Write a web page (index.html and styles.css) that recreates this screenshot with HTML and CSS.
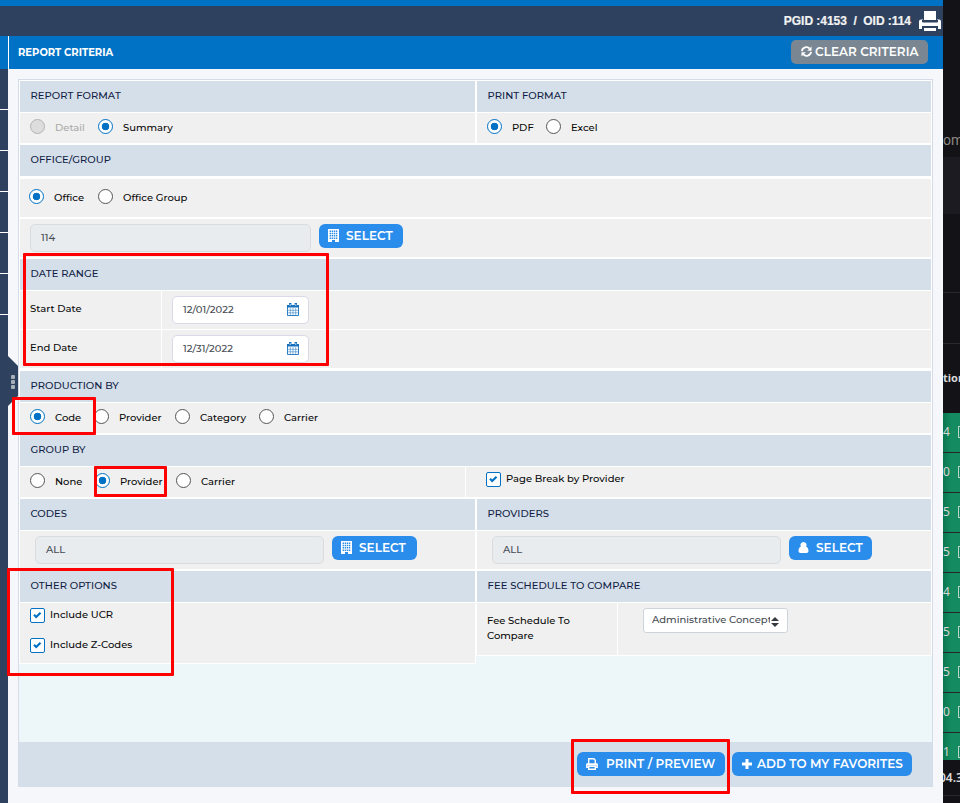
FILE: index.html
```html
<!DOCTYPE html>
<html lang="en">
<head>
<meta charset="utf-8">
<title>Report Criteria</title>
<link rel="stylesheet" href="styles.css">
</head>
<body>
<svg class="defs" width="0" height="0">
  <symbol id="building" viewBox="0 0 11 13"><path fill="currentColor" fill-rule="evenodd" d="M0 0H11V13H7V11H4V13H0ZM1.6 1.5V3H3V1.5ZM3.7 1.5V3H5.1V1.5ZM5.8 1.5V3H7.2V1.5ZM7.9 1.5V3H9.3V1.5ZM1.6 3.8V5.3H3V3.8ZM3.7 3.8V5.3H5.1V3.8ZM5.8 3.8V5.3H7.2V3.8ZM7.9 3.8V5.3H9.3V3.8ZM1.6 6.1V7.6H3V6.1ZM3.7 6.1V7.6H5.1V6.1ZM5.8 6.1V7.6H7.2V6.1ZM7.9 6.1V7.6H9.3V6.1ZM1.6 8.4V9.9H3V8.4ZM3.7 8.4V9.9H5.1V8.4ZM5.8 8.4V9.9H7.2V8.4ZM7.9 8.4V9.9H9.3V8.4Z"/></symbol>
  <symbol id="calendar" viewBox="0 0 12 13"><path fill="none" stroke="currentColor" stroke-width=".9" d="M.5 2.5h11v10H.5z"/><path fill="none" stroke="currentColor" stroke-width=".5" d="M3.3 5v7M6 5v7M8.7 5v7M1 7.3h10M1 9.8h10"/><path fill="currentColor" d="M0 2h12v2.6H0zM2 0h2.4v4H2zM7.6 0H10v4H7.6z"/><path stroke="#fff" stroke-width=".7" d="M3.2 1v2M8.8 1v2"/></symbol>
</svg>
<div class="app">
  <header class="top"><span class="ids">PGID :4153&nbsp; /&nbsp; OID :114</span>
    <svg class="printer" viewBox="0 0 22 20"><path fill="#fff" d="M5 0h12v9H5zM0 10.500q0-2 2-2h2V11h14V8.500h2q2 0 2 2V18h-3v-3H3v3H0zM3 9.500zM5 17h12v3H5z"/><path fill="none" stroke="#2e425f" d="M3.500 9v2h15V9M4 15.500h14"/></svg>
  </header>
  <div class="titlebar"><h1>REPORT CRITERIA</h1>
    <button class="clear"><svg viewBox="0 0 12 12"><path fill="none" stroke="#fff" stroke-width="2" d="M1 5.5A5 5 0 0 1 9.500 2.800M11 6.500A5 5 0 0 1 2.500 9.200"/><path fill="#fff" d="M11.500.5v4.700H6.800zM.5 11.500V6.800h4.700z"/></svg><span>CLEAR CRITERIA</span></button>
  </div>
  <div class="body">
    <nav class="rail"><i></i><i></i><i></i><i></i><i></i><i></i></nav>
    <main class="panel">
      <div class="row r31"><div class="hd half"><b>REPORT FORMAT</b></div><div class="hd"><b>PRINT FORMAT</b></div></div>
      <div class="row r30 g1">
        <div class="cell half radios c-format"><label class="off"><i class="radio dis"></i>Detail</label><label><i class="radio on"></i>Summary</label></div>
        <div class="cell radios c-print"><label><i class="radio on"></i>PDF</label><label><i class="radio"></i>Excel</label></div>
      </div>
      <div class="row r31 g2"><div class="hd"><b>OFFICE/GROUP</b></div></div>
      <div class="row r38 g3"><div class="cell radios c-office"><label><i class="radio on"></i>Office</label><label><i class="radio"></i>Office Group</label></div></div>
      <div class="row r38 g2"><div class="cell fields"><div class="input ro">114</div><button class="btn"><svg><use href="#building"/></svg><span>SELECT</span></button></div></div>
      <div class="row r31 g2"><div class="hd"><b>DATE RANGE</b></div></div>
      <div class="row r38 g1"><div class="cell datelabel">Start Date</div><div class="cell datecell"><div class="input date"><span>12/01/2022</span><svg><use href="#calendar"/></svg></div></div></div>
      <div class="row r38 g1"><div class="cell datelabel">End Date</div><div class="cell datecell"><div class="input date"><span>12/31/2022</span><svg><use href="#calendar"/></svg></div></div></div>
      <div class="row r31 g3"><div class="hd"><b>PRODUCTION BY</b></div></div>
      <div class="row r30 g1"><div class="cell radios c-prod"><label><i class="radio on"></i>Code</label><label><i class="radio"></i>Provider</label><label><i class="radio"></i>Category</label><label><i class="radio"></i>Carrier</label></div></div>
      <div class="row r31 g2"><div class="hd"><b>GROUP BY</b></div></div>
      <div class="row r30 g1"><div class="cell radios c-group"><label><i class="radio"></i>None</label><label><i class="radio on"></i>Provider</label><label><i class="radio"></i>Carrier</label></div>
        <div class="cell pagebreak"><label class="check"><svg viewBox="0 0 13 13"><path d="M3 5.800l2.200 2.200 4.300-4.300"/></svg>Page Break by Provider</label></div></div>
      <div class="row r31 g2"><div class="hd half"><b>CODES</b></div><div class="hd"><b>PROVIDERS</b></div></div>
      <div class="row r38 g1">
        <div class="cell half fields inset"><div class="input ro">ALL</div><button class="btn"><svg><use href="#building"/></svg><span>SELECT</span></button></div>
        <div class="cell fields inset"><div class="input ro">ALL</div><button class="btn user"><svg viewBox="0 0 11 13"><path fill="currentColor" d="M5.500 1a3 3 0 0 1 2.600 4.600C9.700 6.300 10.500 8 10.500 10.200q0 1.800-2 1.800h-6q-2 0-2-1.800C.5 8 1.300 6.300 2.900 5.600A3 3 0 0 1 5.500 1z"/></svg><span>SELECT</span></button></div>
      </div>
      <div class="row r31 g2"><div class="hd half"><b>OTHER OPTIONS</b></div><div class="hd"><b>FEE SCHEDULE TO COMPARE</b></div></div>
      <div class="row last g1">
        <div class="cell half options"><label class="check"><svg viewBox="0 0 13 13"><path d="M3 5.800l2.200 2.200 4.300-4.300"/></svg>Include UCR</label><label class="check"><svg viewBox="0 0 13 13"><path d="M3 5.800l2.200 2.200 4.300-4.300"/></svg>Include Z-Codes</label></div>
        <div class="fee"><div class="cell feelabel">Fee Schedule To<br>Compare</div><div class="cell feecell"><div class="select"><span>Administrative Concept</span><svg viewBox="0 0 8 10"><path fill="#343a40" d="M4 0l4 4H0zM4 10L0 6h8z"/></svg></div></div></div>
      </div>
      <footer class="foot">
        <button class="btn print"><svg viewBox="0 0 12 12"><path fill="none" stroke="#fff" stroke-width="1.400" d="M2.700 6V.8h5.100l1.500 1.500V6M2.700 9.300H.8V6.200h10.400v3.100H9.300M2.700 8.200h6.600v3H2.700z"/><path fill="#fff" d="M1 5.500h10v2H1z"/></svg><span>PRINT / PREVIEW</span></button>
        <button class="btn fav"><svg viewBox="0 0 10 10"><path stroke="#fff" stroke-width="3" d="M5 0v10M0 5h10"/></svg><span>ADD TO MY FAVORITES</span></button>
      </footer>
    </main>
  </div>
</div>
<aside class="strip">
  <div class="s-om">om</div><div class="s-band"></div><div class="s-gap"></div><div class="s-gap2"></div>
  <div class="s-head">tion</div>
  <div class="money"><p>4<i></i></p><p>0<i></i></p><p>5<i></i></p><p>5<i></i></p><p>4<i></i></p><p>5<i></i></p><p>5<i></i></p><p>0<i></i></p><p>1<i></i></p></div>
  <div class="s-total"><span>04.3</span></div>
</aside>
<div class="handle"><i></i><i></i><i></i></div>
<div class="mark m-date"></div><div class="mark m-code"></div><div class="mark m-prov"></div><div class="mark m-other"></div><div class="mark m-print"></div>
</body>
</html>
```
FILE: styles.css
```css
* { box-sizing: border-box; }
body { margin: 0; width: 960px; height: 803px; overflow: hidden; display: flex; position: relative; background: #121217; color: #080808; font: 500 10px/15px Montserrat, Inter, "Open Sans", sans-serif; }
i { font-style: normal; }
b { font-weight: 500; }
.defs { position: absolute; }
.app { width: 943px; height: 803px; flex: none; background: #f6f7fa; }
.top { height: 36px; border-top: 6px solid #0072c6; background: #2e425f; color: #f2f2f2; display: flex; justify-content: flex-end; padding: 5px 2px 0 0; }
.ids { font: 700 12px/20px "Liberation Sans", sans-serif; letter-spacing: -.04px; margin-right: 8px; white-space: nowrap; -webkit-text-stroke: .2px #f2f2f2; }
.printer { width: 22px; height: 20px; }
.titlebar { height: 33px; background: linear-gradient(90deg, transparent 8px, #fff 8px, #fff 9px, transparent 9px) #0072c6; display: flex; justify-content: space-between; padding: 4px 15px 0 18px; }
h1 { margin: 0; color: #fff; font-size: 10px; line-height: 25px; font-weight: 700; }
button { border: 0; font-family: inherit; color: #fff; white-space: nowrap; display: flex; align-items: center; flex: none; }
.clear { width: 137px; height: 24px; border-radius: 5px; background: #7a8793; padding: 0 0 1px 10px; font-size: 12px; font-weight: 600; letter-spacing: .04px; }
.clear svg { width: 11px; height: 11px; margin-right: 3px; }
.body { display: flex; height: 734px; }
.rail { width: 8px; height: 734px; background: #2e425f; flex: none; }
.rail i { display: block; height: 41px; border-bottom: 1px solid #fff; }
.panel { margin: 10px 0 0 10px; width: 915px; height: 708px; border: 1px solid #d5dbe8; border-bottom: 0; background: #edf6f8; display: flex; flex-direction: column; }
.row { display: flex; gap: 2px; background: #fff; border: 0 solid #fff; border-left-width: 1px; border-right-width: 1px; box-sizing: content-box; flex: none; }
.r31 { height: 31px; }
.r30 { height: 30px; }
.r38 { height: 38px; }
.panel > .row:first-child { border-top-width: 1px; }
.g1 { border-top-width: 1px; }
.g2 { border-top-width: 2px; }
.g3 { border-top-width: 3px; }
.hd { background: #d5dfe9; color: #101d45; flex: 1; padding-left: 10.5px; line-height: 29px; white-space: nowrap; letter-spacing: .05px; }
.cell { background: #f0f0f0; flex: 1; }
.half { flex: 0 0 455px; }
.radios { display: grid; padding-left: 10px; }
.radios label { display: flex; align-items: center; gap: 10px; padding-bottom: 2px; white-space: nowrap; line-height: 27px; }
.radio { width: 15px; height: 15px; border: 1px solid #555; border-radius: 50%; background: #fff; flex: none; position: relative; top: -.5px; }
.on { border-color: #0072c6; background: radial-gradient(circle, #0072c6 3.5px, #fff 4.1px); }
.off { color: #aaa; }
.dis { border-color: #b3b3b3; background: #ddd; }
.c-format { grid-template-columns: 68px 1fr; }
.c-print { grid-template-columns: 59px 1fr; }
.c-office { grid-template-columns: 69px 1fr; padding-left: 9px; }
.c-prod { grid-template-columns: 64px 81px 84px 1fr; }
.c-group { grid-template-columns: 65px 81px 1fr; flex: 0 0 445px; }
.r38 .radios label { padding-bottom: 2px; }
.c-office .radio { top: -1px; }
.fields { display: flex; padding: 5px 0 0 10px; gap: 8px; }
.input { height: 28px; border: 1px solid #dadddf; border-radius: 5px; padding: 0 10px; line-height: 26px; color: #454b52; font-weight: 500; }
.ro { width: 281px; background: #e8ecef; }
.inset { padding-left: 15px; }
.inset .ro { width: 289px; }
.inset .user { margin-left: 0; }
.btn { height: 24px; width: 84px; border-radius: 6px; background: #2b8deb; padding: 0 0 1px 9px; font-size: 12px; font-weight: 600; letter-spacing: .05px; }
.inset .btn { width: 85px; }
.inset .user { width: 83px; }
.btn svg { width: 11px; height: 13px; margin-right: 7px; }
.datelabel { flex: 0 0 141px; padding: 10px; }
.row:has(.datelabel) { gap: 1px; }
.datecell { padding: 5px 10px; }
.date { width: 137px; background: #fff; border-color: #d8dae8; display: flex; align-items: center; justify-content: space-between; padding-right: 9px; }
.date span { padding-bottom: 1px; }
.date svg { width: 12px; height: 13px; color: #1670be; margin-bottom: 1px; }
.row:has(.pagebreak) { gap: 1px; }
.pagebreak { padding: 5px 0 0 20px; }
.check { display: flex; gap: 5px; white-space: nowrap; height: 15px; line-height: 13px; }
.check svg { width: 15px; height: 15px; border: 1px solid #0072c6; border-radius: 2px; background: #fff; flex: none; }
.check path { fill: none; stroke: #0072c6; stroke-width: 2.1; }
.last { height: 60px; background: none; gap: 1px; border-right: 0; }
.options { padding: 5px 0 0 10px; display: flex; flex-direction: column; gap: 15px; box-shadow: 1px 1px 0 #fff, -1px 1px 0 #fff; }
.fee { flex: 1; height: 53px; display: flex; gap: 1px; background: #fff; padding: 0 1px 1px; }
.feelabel { flex: 0 0 140px; padding: 10px 0 0 10px; }
.feecell { padding: 5px 0 0 25px; }
.select { width: 145px; height: 25px; border: 1px solid #ced4da; border-radius: 3px; background: #fff; display: flex; align-items: center; padding: 0 8px; color: #454b52; line-height: 21px; font-weight: 500; }
.select span { width: 118px; overflow: hidden; white-space: nowrap; flex: none; padding-bottom: 2px; }
.select svg { width: 8px; height: 10px; margin-left: 1px; margin-top: 2px; flex: none; }
.foot { height: 45px; margin-top: auto; background: #d5dfe9; display: flex; justify-content: flex-end; gap: 7px; padding: 10px 20px 0 0; }
.print { width: 148px; }
.print svg { width: 12px; height: 12px; margin-right: 8px; }
.fav { width: 180px; padding-left: 10px; }
.fav svg { width: 10px; height: 10px; margin-right: 5px; }
.strip { width: 17px; height: 803px; overflow: hidden; background: #121217; color: #d8d8d8; font: 12px/20px "Noto Sans", sans-serif; flex: none; }
.s-om { height: 157px; padding-top: 130px; color: #8b8781; font: 14px/20px Roboto, sans-serif; }
.s-band { height: 57px; background: #1b1b21; }
.s-gap { height: 79px; border-bottom: 1px solid #292929; }
.s-gap2 { height: 51px; border-bottom: 1px solid #292929; }
.s-head { height: 69px; padding-top: 24px; font: 700 11px/20px "Noto Sans", sans-serif; }
.money { height: 347px; overflow: hidden; background: linear-gradient(90deg, #0b7650, #148b60 8px); }
.money p { margin: 0; height: 40px; border-bottom: 1px solid #24282a; padding-top: 9px; display: flex; gap: 8px; }
.money p i { width: 9px; height: 12px; border: 1px solid #b8d5c5; margin-top: 4px; flex: none; }
.s-total { height: 36px; border-bottom: 1px solid #292929; padding-top: 8px; font-weight: 600; }
.s-total span { margin-left: -4px; }
.handle { position: absolute; left: 8px; top: 356px; width: 10px; height: 50px; background: #2e425f; clip-path: polygon(0 0, 100% 10px, 100% 40px, 0 100%); display: flex; flex-direction: column; align-items: center; gap: 1px; padding-top: 19px; }
.handle i { width: 4px; height: 4px; border-radius: 1px; background: #a9afb8; flex: none; }
.mark { position: absolute; border: 3px solid #f00; border-radius: 1px; }
.m-date { left: 23px; top: 253px; width: 306px; height: 113px; }
.m-code { left: 12px; top: 397px; width: 84px; height: 38px; }
.m-prov { left: 94px; top: 466px; width: 73px; height: 31px; }
.m-other { left: 7px; top: 568px; width: 167px; height: 108px; }
.m-print { left: 571px; top: 739px; width: 159px; height: 55px; }
```
